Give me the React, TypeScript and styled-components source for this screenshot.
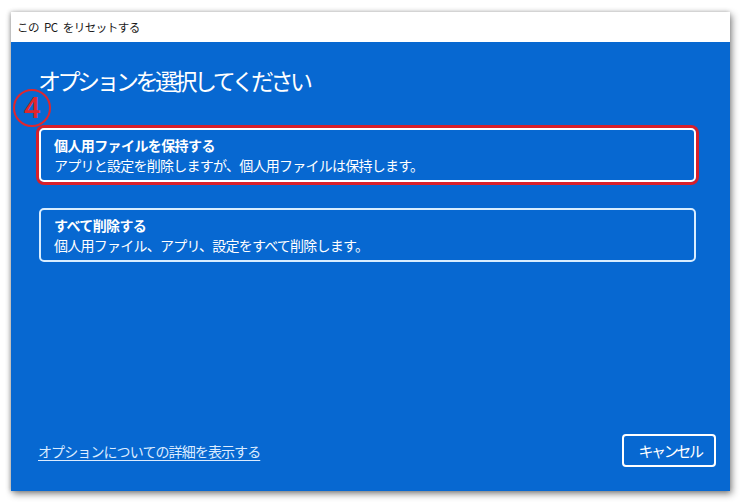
import React from 'react';
import styled, { createGlobalStyle } from 'styled-components';

const JP = `'Noto Sans CJK JP', 'Noto Sans', sans-serif`;

const GlobalStyle = createGlobalStyle`
  html, body {
    margin: 0;
    padding: 0;
    background: #ffffff;
  }
  body {
    font-family: ${JP};
  }
`;

const Page = styled.div`
  width: 742px;
  height: 502px;
  padding: 12px 12px 11px 11px;
  box-sizing: border-box;
  background: #ffffff;
`;

const Window = styled.div`
  width: 719px;
  height: 479px;
  display: flex;
  flex-direction: column;
  box-shadow: 2px 3px 7px rgba(0, 0, 0, 0.45), -1px 0 4px rgba(0, 0, 0, 0.25);
`;

const TitleBar = styled.div`
  height: 30px;
  flex-shrink: 0;
  display: flex;
  align-items: center;
  padding-left: 6px;
  background: #ffffff;
  color: #1a1a1a;
  font-size: 11.5px;
  letter-spacing: -0.5px;
  word-spacing: 3px;
`;

const Content = styled.div`
  flex: 1;
  display: flex;
  flex-direction: column;
  padding: 23px 14px 24px 27px;
  background: #0768d1;
  color: #ffffff;
`;

const Heading = styled.h1`
  margin: 0 0 33px;
  font-size: 23px;
  line-height: 30px;
  font-weight: 400;
  letter-spacing: -3.5px;
`;

const OptionList = styled.div`
  position: relative;
  display: flex;
  flex-direction: column;
  gap: 26px;
  margin: 0 20px 0 1px;
`;

const StepBadge = styled.span`
  position: absolute;
  left: -26px;
  top: -39px;
  width: 38px;
  height: 38px;
  box-sizing: border-box;
  border: 2px solid #e0262d;
  border-radius: 50%;
  display: flex;
  align-items: center;
  justify-content: center;
  color: #e0262d;
  font-family: Roboto, 'Liberation Sans', sans-serif;
  font-size: 30px;
  font-weight: 500;
  line-height: 1;
  padding-bottom: 1px;
`;

const OptionCard = styled.div<{ $highlighted?: boolean }>`
  height: 54px;
  box-sizing: border-box;
  padding: 5px 13px;
  border: 2px solid ${p => (p.$highlighted ? '#ffffff' : '#d8edff')};
  border-radius: 5px;
  box-shadow: ${p => (p.$highlighted ? '0 0 0 3px #d71f2a' : 'none')};
`;

const OptionTitle = styled.div`
  font-size: 14px;
  line-height: 20px;
  font-weight: 700;
  letter-spacing: -0.6px;
`;

const OptionText = styled.div`
  font-size: 14px;
  line-height: 20px;
  letter-spacing: -0.75px;
`;

const Footer = styled.div`
  margin-top: auto;
  display: flex;
  align-items: center;
  justify-content: space-between;
`;

const MoreLink = styled.a`
  color: #dcecff;
  font-size: 14px;
  letter-spacing: -0.9px;
  text-decoration: underline;
  text-underline-offset: 3px;
  cursor: pointer;
`;

const CancelButton = styled.button`
  width: 94px;
  height: 33px;
  border: 2px solid #ffffff;
  border-radius: 4px;
  background: transparent;
  color: #ffffff;
  font-family: ${JP};
  font-size: 15px;
  letter-spacing: -2.4px;
  padding: 0 0 0 2px;
`;

const options = [
  {
    title: '個人用ファイルを保持する',
    text: 'アプリと設定を削除しますが、個人用ファイルは保持します。',
    highlighted: true,
  },
  {
    title: 'すべて削除する',
    text: '個人用ファイル、アプリ、設定をすべて削除します。',
  },
];

export default function App() {
  return (
    <>
      <GlobalStyle />
      <Page>
        <Window>
          <TitleBar>この PC をリセットする</TitleBar>
          <Content>
            <Heading>オプションを選択してください</Heading>
            <OptionList>
              <StepBadge>4</StepBadge>
              {options.map(o => (
                <OptionCard key={o.title} $highlighted={o.highlighted}>
                  <OptionTitle>{o.title}</OptionTitle>
                  <OptionText>{o.text}</OptionText>
                </OptionCard>
              ))}
            </OptionList>
            <Footer>
              <MoreLink>オプションについての詳細を表示する</MoreLink>
              <CancelButton>キャンセル</CancelButton>
            </Footer>
          </Content>
        </Window>
      </Page>
    </>
  );
}
